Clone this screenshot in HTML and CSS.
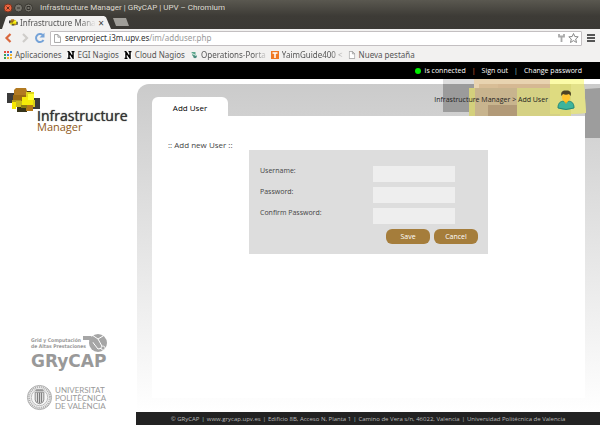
FILE: index.html
```html
<!DOCTYPE html>
<html lang="en">
<head>
<meta charset="utf-8">
<title>Infrastructure Manager | GRyCAP | UPV</title>
<link rel="stylesheet" href="styles.css">
</head>
<body>
<svg class="defs" aria-hidden="true">
  <symbol id="page" viewBox="0 0 8 10"><path d="M.5.5h4l3 3v6h-7zM4.500.5v3h3" fill="#fff" stroke="#999"/></symbol>
  <symbol id="cubes" viewBox="0 0 34 25">
    <path d="M0 5h8v10H0z" fill="#3b3b3b"/><path d="M26 10h7v11h-7z" fill="#3b3b3b"/><path d="M10 16h10v8H10z" fill="#37341a"/><path d="M20 3h4v5h-4z" fill="#4d3a14"/>
    <path d="M9 0h10l1 3v8H7V2z" fill="#b27a22"/><path d="M6 7h13v8H6z" fill="#9b6a14"/><path d="M5 12h9v5H5z" fill="#b09a18"/><path d="M9 13h8v6H9z" fill="#c9bb1c"/>
    <path d="M19 4h8v7h-8z" fill="#e0d51c"/><path d="M15 9h12v9H15z" fill="#f5ea08"/><path d="M21 6h6v6h-6z" fill="#ffff30"/><path d="M19 17h7v6h-7z" fill="#b37819"/><path d="M14 17h6v3h-6z" fill="#8c7d12"/><path d="M5 14h4v7H5z" fill="#f5e800"/><path d="M26 12h2v7h-2z" fill="#d9cf1c"/>
  </symbol>
</svg>
<header class="browser">
  <div class="titlebar">
    <svg class="win" viewBox="0 0 30 10" aria-hidden="true">
      <circle cx="5" cy="5" r="4" fill="#ee6640" stroke="#79341f"/><path d="M3.500 3.500l3 3m0-3l-3 3" stroke="#66301e"/>
      <circle cx="15.500" cy="5" r="4" fill="#76746c" stroke="#393731"/><path d="M14 5h3" stroke="#33312c"/>
      <circle cx="25.500" cy="5" r="4" fill="#76746c" stroke="#393731"/><path d="M24 3.500h3v3h-3z" fill="none" stroke="#33312c"/>
    </svg>
    <span>Infrastructure Manager | GRyCAP | UPV – Chromium</span>
  </div>
  <div class="tabs">
    <div class="tab"><svg class="favicon" aria-hidden="true"><use href="#cubes"/></svg><span class="tab-title">Infrastructure Mana</span><button class="close" aria-label="Close tab">×</button></div>
    <button class="newtab" aria-label="New tab"></button>
  </div>
  <div class="toolbar">
    <svg class="nav" viewBox="0 0 42 12" aria-hidden="true"><path d="M7.500 2L3.500 6l4 4" fill="none" stroke="#d9683e" stroke-width="2.200"/><path d="M20 2l4 4-4 4" fill="none" stroke="#cfcdca" stroke-width="2.200"/><path d="M40.500 8a4 4 0 1 1-.8-5" fill="none" stroke="#75a3d8" stroke-width="2"/><path d="M41.500.8V5.500h-5z" fill="#75a3d8"/></svg>
    <div class="address">
      <svg class="page" aria-hidden="true"><use href="#page"/></svg>
      <span class="url">servproject.i3m.upv.es<span>/im/adduser.php</span></span>
      <svg class="tools" viewBox="0 0 22 12" aria-hidden="true"><path d="M2 2v2.500h5V2M4.500 4.500V10" fill="none" stroke="#aaa" stroke-width="1.800"/><path d="M16.500 1.500l1.300 3 3.400.3-2.500 2.200.8 3.500-3-1.900-3 1.900.8-3.500-2.500-2.200 3.400-.3z" fill="#fff" stroke="#888"/></svg>
    </div>
    <svg class="menu" viewBox="0 0 8 8" aria-hidden="true"><path d="M0 1h8M0 4h8M0 7h8" stroke="#555" stroke-width="2"/></svg>
  </div>
  <nav class="bookmarks" aria-label="Bookmarks">
    <a href="#"><svg viewBox="0 0 8 8" aria-hidden="true"><path d="M0 1h2m1 0h2" stroke="#e34b3b" stroke-width="2"/><path d="M6 1h2M3 4h2" stroke="#3e82d8" stroke-width="2"/><path d="M0 4h2M0 7h2" stroke="#38a253" stroke-width="2"/><path d="M6 4h2M3 7h5" stroke="#f0b52d" stroke-width="2" stroke-dasharray="2 1"/></svg>Aplicaciones</a>
    <a href="#"><svg viewBox="0 0 8 8" aria-hidden="true"><path d="M0 0h8v8H0z" fill="#fff"/><path d="M2 8V1l4 6V0M.5 7.500h3M4.500.5h3M.5.5h2" fill="none" stroke="#000" stroke-width="1.500"/></svg>EGI Nagios</a>
    <a href="#"><svg viewBox="0 0 8 8" aria-hidden="true"><path d="M0 0h8v8H0z" fill="#fff"/><path d="M2 8V1l4 6V0M.5 7.500h3M4.500.5h3M.5.5h2" fill="none" stroke="#000" stroke-width="1.500"/></svg>Cloud Nagios</a>
    <a href="#"><svg viewBox="0 0 8 8" aria-hidden="true"><path d="M1.500 1h4v4h-3z" fill="#5ca58c"/><circle cx="5" cy="5.500" r="1.800" fill="#4a8b7d"/><path d="M2 2.500l4 2" stroke="#d8eee4"/></svg><span class="fade">Operations-Porta</span></a>
    <a href="#"><svg viewBox="0 0 8 8" aria-hidden="true"><path d="M0 0h8v8H0z" fill="#f07822"/><path d="M1.500 2h5M4 2v5" stroke="#fff" stroke-width="1.500"/></svg><span class="fade">YaimGuide400 &lt;</span></a>
    <a href="#"><svg viewBox="0 0 8 10" aria-hidden="true"><use href="#page"/></svg>Nueva pestaña</a>
  </nav>
</header>
<div class="session">
  <span class="dot"></span><span>is connected</span><i class="orange">|</i><a href="#">Sign out</a><i class="aqua">|</i><a href="#">Change password</a>
</div>
<div class="site">
  <aside class="side">
    <a class="brand" href="#"><svg viewBox="0 0 34 25" aria-hidden="true"><use href="#cubes"/></svg><span class="brand-text"><b>Infrastructure</b><em>Manager</em></span></a>
    <div class="partners">
      <a class="grycap" href="#">
        <span class="grycap-top"><span>Grid y Computación<br>de Altas Prestaciones</span>
        <svg viewBox="0 0 26 20" aria-hidden="true"><circle cx="16" cy="10" r="9" fill="#a6a6a6"/><path d="M1 2h9l6 4 5-3M9 7l7 9 5-1M16 6l5 9" fill="none" stroke="#fff" stroke-width="1"/><path d="M1 3h8l4 4-3 3-3-3H1z" fill="#a6a6a6"/><circle cx="21" cy="15" r="2" fill="#a6a6a6" stroke="#fff" stroke-width=".8"/></svg></span>
        <strong>GRyCAP</strong>
      </a>
      <a class="upv" href="#">
        <svg viewBox="0 0 28 28" aria-hidden="true"><circle cx="14" cy="14" r="12.500" fill="#eee" stroke="#aaa"/><circle cx="14" cy="14" r="10.800" fill="none" stroke="#aaa" stroke-width="2" stroke-dasharray="1 1"/><circle cx="14" cy="14" r="8.500" fill="#f7f7f7" stroke="#bbb"/><path d="M9.500 8.500h9v8q0 3-4.500 4-4.500-1-4.500-4z" fill="#ddd" stroke="#888"/><path d="M12 9v10m2-10v11m2-11v10" stroke="#777"/><path d="M10 6.500h8" stroke="#999" stroke-width="2"/></svg>
        <span>UNIVERSITAT<br>POLITÈCNICA<br>DE VALÈNCIA</span>
      </a>
    </div>
  </aside>
  <div class="column">
    <main class="frame">
      <div class="head">
        <h1>Add User</h1>
        <div class="crumbs"><span>Infrastructure Manager &gt; Add User</span>
        <svg viewBox="0 0 18 20" aria-hidden="true"><path d="M1 18c0-6 3-7 8-7s8 1 8 7q-8 3-16 0z" fill="#3db49c" stroke="#268777"/><path d="M6 10l3 4 3-4z" fill="#e7a91c"/><ellipse cx="9" cy="7" rx="4" ry="5" fill="#ffc52e"/><path d="M4.500 6C3 1 7 0 9 .5c4-.5 6 2 4.500 5.500L12 4c-2 1-4 1-6 0z" fill="#4c4325"/></svg></div>
      </div>
      <section class="panel">
        <h2>:: Add new User ::</h2>
        <form class="form">
          <label for="user">Username:</label><input id="user" type="text">
          <label for="pass">Password:</label><input id="pass" type="password">
          <label for="confirm">Confirm Password:</label><input id="confirm" type="password">
          <div class="actions"><button type="button">Save</button><button type="button">Cancel</button></div>
        </form>
      </section>
    </main>
    <svg class="art" viewBox="0 0 157 59" aria-hidden="true">
      <path d="M0 5h32v28H0z" fill="#9b9b9b"/><path d="M0 0h32v5H0z" fill="#ddd"/><path d="M142 10l15-1v50h-15z" fill="#9d9d9d"/>
      <path d="M26 9h10v28H26z" fill="#d4d07c"/><path d="M31 0h76v9H31z" fill="#e8d3b0"/><path d="M36 5h19v4H36z" fill="#d8bd96"/><path d="M55 5h52v4H55z" fill="#d5b892"/>
      <path d="M32 9h43v28H32z" fill="#c8b48e"/><path d="M45 26h30v11H45z" fill="#b29a78"/><path d="M74 9h54v28H74z" fill="#d5d184"/>
      <path d="M107 0h34v5h-34z" fill="#fbfba8"/><path d="M107 5h34l2 29-15 1h-21z" fill="#dedb80"/><path d="M128 5h13l2 29-15 1z" fill="#e3e18a"/><path d="M117 5h11v32h-11z" fill="#dbd97b"/>
    </svg>
    <footer><span>© GRyCAP</span><i class="aqua">|</i><a href="#">www.grycap.upv.es</a><i>|</i><span>Edificio 8B, Acceso N, Planta 1</span><i class="aqua">|</i><span>Camino de Vera s/n, 46022, Valencia</span><i>|</i><span>Universidad Politécnica de Valencia</span></footer>
  </div>
</div>
</body>
</html>
```
FILE: styles.css
```css
* { box-sizing: border-box; }
body { margin: 0; min-height: 100vh; display: flex; flex-direction: column; background: #fff; color: #444; font: 7px/10px "Open Sans", sans-serif; }
a { color: inherit; text-decoration: none; }
button, input { font: inherit; border: 0; padding: 0; margin: 0; }
i, em { font-style: normal; }
svg { flex: none; display: block; }
.defs { position: absolute; width: 0; height: 0; }

.browser { font-family: "Noto Sans", sans-serif; font-size: 8px; background: linear-gradient(#5a5850, #3d3b36 16px, #3b3935 29px); }
.titlebar { display: flex; align-items: center; gap: 7px; height: 16px; padding-left: 3px; color: #dfdbd2; font-family: Roboto, sans-serif; }
.win { width: 30px; height: 10px; }
.tabs { display: flex; height: 13px; padding-left: 2px; gap: 2px; }
.tab { display: flex; align-items: center; width: 109px; padding: 0 5px 0 7px; background: #f2f1f0; clip-path: polygon(0 100%, 4px 10%, 6px 0, 102px 0, 104px 10%, 100% 100%); color: #555; }
.favicon { width: 9px; height: 7px; margin-right: 2px; }
.tab-title { flex: 1; white-space: nowrap; mask-image: linear-gradient(90deg, #000 80%, transparent); }
.close { width: 10px; background: none; color: #444; font-size: 10px; }
.newtab { width: 16px; height: 8px; margin-top: 2px; background: #a09e99; clip-path: polygon(0 0, 13px 0, 100% 100%, 3px 100%); }
.toolbar { display: flex; align-items: center; height: 18px; padding: 0 5px 0 3px; gap: 5px; background: #f2f1f0; }
.nav { width: 42px; height: 12px; }
.address { flex: 1; display: flex; align-items: center; gap: 4px; height: 15px; padding: 0 2px 0 3px; background: #fff; border: 1px solid #c3bfc1; border-radius: 1px; }
.page { width: 7px; height: 9px; }
.url { flex: 1; color: #333; }
.url span { color: #999; }
.tools { width: 22px; height: 12px; }
.menu { width: 8px; height: 8px; }
.bookmarks { display: flex; align-items: center; height: 15px; padding: 0 4px; gap: 5px; background: #f2f1f0; color: #555; white-space: nowrap; }
.bookmarks a { display: flex; align-items: center; gap: 3px; }
.bookmarks svg { width: 8px; height: 8px; }
.fade { mask-image: linear-gradient(90deg, #000 80%, rgb(0 0 0 / 20%)); }

.session { display: flex; align-items: center; justify-content: flex-end; height: 17px; padding-right: 18px; background: #000; color: #fff; }
.session i { margin: 0 6px; }
.session .orange { color: #ed6c3c; }
.aqua { color: #9dd2d2; }
.dot { width: 6px; height: 6px; margin-right: 4px; border-radius: 50%; background: #00f000; }

.site { flex: 1; display: flex; }
.side { flex: none; width: 136px; display: flex; flex-direction: column; justify-content: space-between; padding: 9px 0 14px 7px; }
.brand { display: flex; }
.brand svg { width: 34px; height: 25px; }
.brand-text { display: flex; flex-direction: column; margin: 20px 0 0 -4px; }
.brand b { font-size: 14px; line-height: 16px; font-weight: 400; color: #333; text-shadow: 0 0 1px #333; }
.brand em { font-size: 11px; line-height: 6px; color: #8f5918; }
.partners { display: flex; flex-direction: column; gap: 14px; padding-left: 19px; color: #999; }
.grycap { display: flex; flex-direction: column; padding-left: 5px; }
.grycap-top { display: flex; align-items: center; font: bold 5px/6px "DejaVu Sans Condensed", "DejaVu Sans", sans-serif; white-space: nowrap; }
.grycap-top svg { width: 26px; height: 20px; margin-left: -4px; }
.grycap strong { font: bold 17px/17px "DejaVu Sans", sans-serif; }
.upv { display: flex; align-items: center; gap: 2px; font: 8px/8px Lato, sans-serif; }
.upv svg { width: 27px; height: 27px; }

.column { flex: 1; position: relative; z-index: 0; display: flex; flex-direction: column; padding-top: 5px; }
.art { position: absolute; top: 0; right: 0; width: 157px; height: 59px; }
.frame { flex: 1; display: flex; flex-direction: column; margin-left: 1px; padding: 0 15px 14px; border-radius: 12px 0 0 0; background: linear-gradient(#cbcbcb, #fff); }
.head { display: flex; justify-content: space-between; height: 32px; color: #222; }
.head h1 { align-self: flex-end; width: 76px; height: 19px; margin: 0; border-radius: 6px 6px 0 0; background: #fff; color: #000; font-size: 8px; font-weight: 400; line-height: 21px; text-align: center; }
.crumbs { position: relative; z-index: 1; display: flex; align-items: center; gap: 9px; padding-right: 10px; }
.crumbs svg { width: 18px; height: 20px; }
.panel { position: relative; z-index: 1; flex: 1; display: flex; flex-direction: column; padding: 24px 16px; background: #fff; }
.panel h2 { margin: 0; color: #444; font-size: 8px; line-height: 10px; font-weight: 400; }
.form { align-self: center; display: grid; grid-template-columns: 1fr 82px; gap: 5px 0; width: 239px; height: 104px; padding: 16px 33px 0 11px; background: #ddd; align-content: start; }
.form label { line-height: 10px; }
.form input { width: 82px; height: 16px; background: #eee; }
.actions { grid-column: 1 / -1; display: flex; justify-content: flex-end; gap: 4px; margin-right: -23px; }
.actions button { width: 44px; height: 15px; border-radius: 6px; background: #a57d3b; color: #fff; }
footer { display: flex; align-items: center; justify-content: center; height: 13px; background: #222; color: #bbb; font-size: 6px; white-space: nowrap; }
footer i { margin: 0 2px; }
```
